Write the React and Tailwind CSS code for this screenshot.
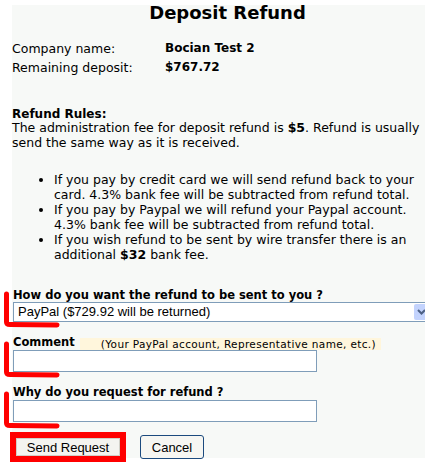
import React from "react";

function RedMarks() {
  // hand-drawn red annotation strokes over the form
  return (
    <svg className="absolute left-0 top-0 pointer-events-none" width="425" height="465">
      <g fill="none" stroke="#ff0000" strokeWidth="5" strokeLinecap="round" strokeLinejoin="round">
        <path d="M6.5 294 L6.5 322 Q6.5 324.5 10 324.5 L57 325" />
        <path d="M6.5 344 L6.5 372 Q6.5 374.5 10 374.5 L57 375" />
        <path d="M6.5 394 L6.5 423 Q6.5 425.5 10 425.5 L57 426" />
      </g>
    </svg>
  );
}

export default function App() {
  const verdana = { fontFamily: '"DejaVu Sans", Verdana, sans-serif' };
  const arial = { fontFamily: '"Liberation Sans", Arial, sans-serif' };

  return (
    <div className="relative w-[425px] h-[465px] overflow-hidden bg-white text-black" style={verdana}>
      <div className="ml-[12px] mt-[5px] w-[431px] h-[453px] bg-[#f7f9f7]">
        <h1 className="text-center text-[18px] font-bold leading-[16px]">Deposit Refund</h1>

        <div className="mt-[18px] text-[12.5px] leading-[19px]">
          <div className="flex">
            <span className="w-[153px]">Company name:</span>
            <span className="text-[12px] font-bold">Bocian Test 2</span>
          </div>
          <div className="flex">
            <span className="w-[153px]">Remaining deposit:</span>
            <span className="text-[12px] font-bold">$767.72</span>
          </div>
        </div>

        <div className="mt-[32px] w-[413px] text-[12.5px] leading-[15px]">
          <div className="text-[12px] font-bold leading-[11px]">Refund Rules:</div>
          <p>
            The administration fee for deposit refund is <b>$5</b>. Refund is usually send the same way as it is received.
          </p>
          <ul className="mt-[22px] list-disc pl-[42px] pr-[10px]">
            <li>If you pay by credit card we will send refund back to your card. 4.3% bank fee will be subtracted from refund total.</li>
            <li>If you pay by Paypal we will refund your Paypal account. 4.3% bank fee will be subtracted from refund total.</li>
            <li>If you wish refund to be sent by wire transfer there is an additional <b>$32</b> bank fee.</li>
          </ul>
        </div>

        <div className="mt-[27px] pl-[1px]">
          <div className="text-[11.5px] font-bold leading-[13px]">How do you want the refund to be sent to you ?</div>
          <div className="flex h-[20px] w-[420px] items-center justify-between border border-[#7f9db9] bg-white" style={arial}>
            <span className="pl-[4px] text-[13px] leading-[18px]">PayPal ($729.92 will be returned)</span>
            <span className="mr-[3px] flex h-[16px] w-[15px] items-center justify-center rounded-[2px] bg-[#c3d3fd]">
              <svg width="9" height="6" viewBox="0 0 9 6">
                <path d="M1 1 L4.5 4.5 L8 1" fill="none" stroke="#4d6185" strokeWidth="2" />
              </svg>
            </span>
          </div>

          <div className="mt-[13px] flex items-end leading-[15px]">
            <span className="text-[11.5px] font-bold">Comment</span>
            <span className="ml-[5px] bg-[#fff6dc] pl-[21px] pr-[5px] text-[10.5px] leading-[12px] tracking-[0.35px]">
              (Your PayPal account, Representative name, etc.)
            </span>
          </div>
          <div className="h-[22px] w-[304px] border border-[#7f9db9] bg-white" />

          <div className="mt-[13px] text-[11.5px] font-bold leading-[15px]">Why do you request for refund ?</div>
          <div className="h-[22px] w-[304px] border border-[#7f9db9] bg-white" />

          <div className="mt-[10px] -ml-[3px] flex items-center gap-[14px]" style={arial}>
            <div className="border-[6px] border-[#ff0000]">
              <button className="flex h-[18px] w-[104px] items-center justify-center border border-[#d0d0c8] bg-[#f4f4f0] text-[13px] leading-none">
                Send Request
              </button>
            </div>
            <button className="flex h-[24px] w-[64px] items-center justify-center rounded-[3px] border border-[#1c4a7e] bg-[#f6f6f2] text-[13px] leading-none">
              Cancel
            </button>
          </div>
        </div>
      </div>
      <RedMarks />
    </div>
  );
}
